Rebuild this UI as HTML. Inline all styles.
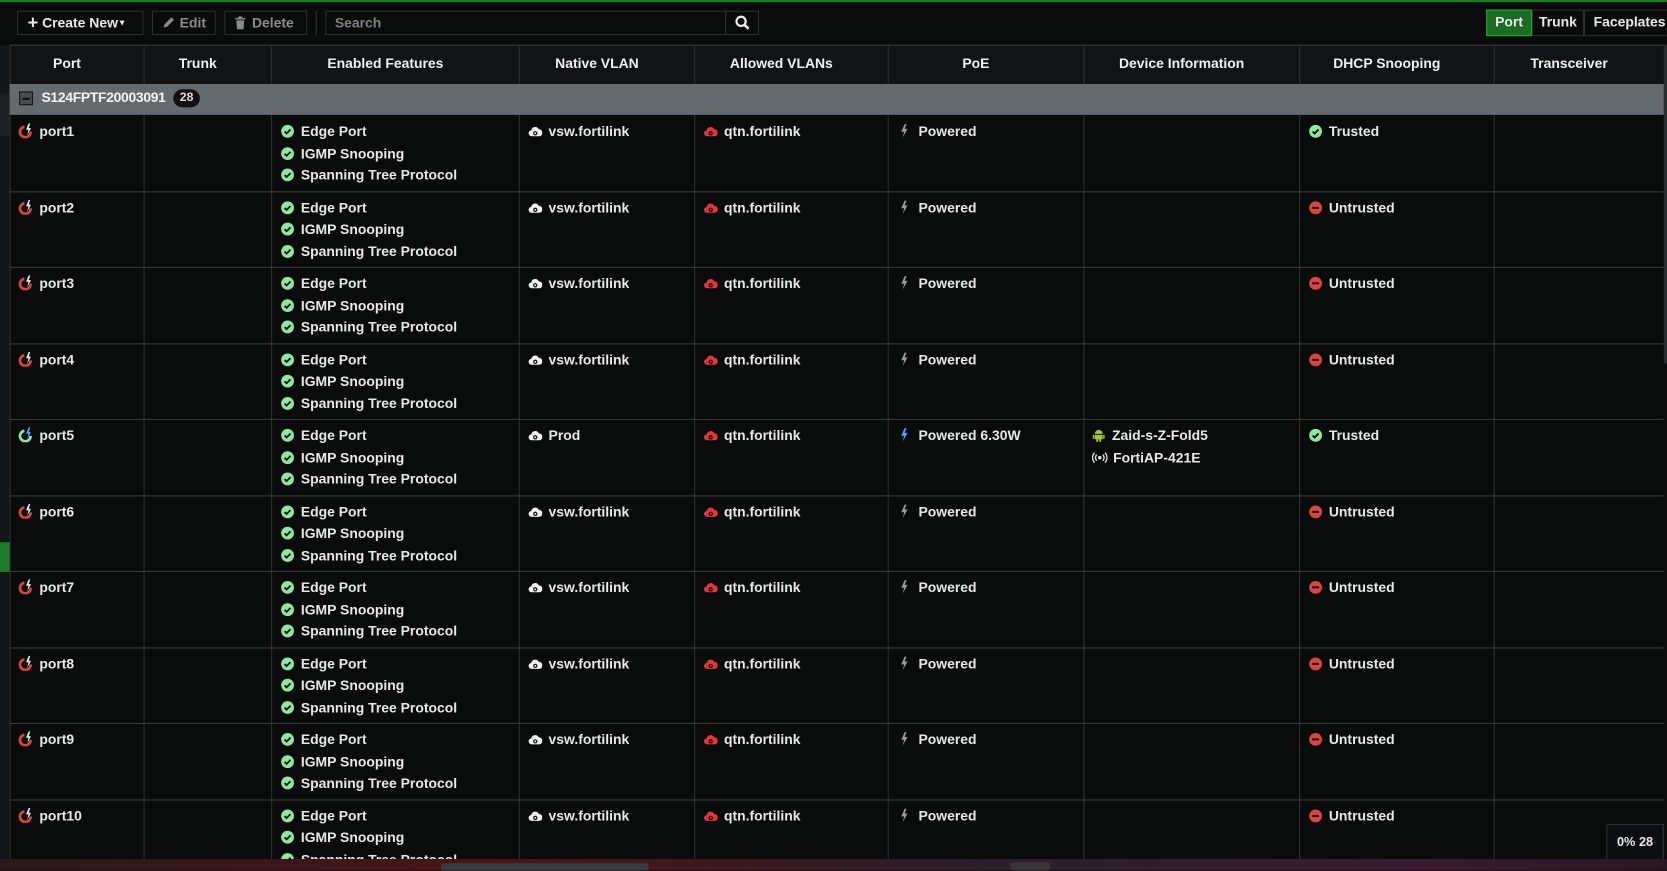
<!DOCTYPE html>
<html><head><meta charset="utf-8"><style>
html,body{margin:0;padding:0;background:#0a0b0b;overflow:hidden;width:1667px;height:871px}
#w{position:absolute;left:0;top:0;width:1568px;height:819px;transform:scale(1.0631);transform-origin:0 0;background:#0a0b0b;font-family:"Liberation Sans",sans-serif;font-weight:bold;font-size:13.1px;color:#e8e8e8;overflow:hidden}
.a{position:absolute}
.btn{position:absolute;top:10px;height:23px;border:1px solid #2d2f30;box-sizing:border-box;line-height:21px;padding:0 8px;color:#e8e8e8;white-space:nowrap}
.vl{position:absolute;top:43px;bottom:11px;width:1px;background:#2e3032}
.hl{position:absolute;left:9px;width:1556px;height:1px;background:#3a3c3e}
.th{position:absolute;top:43px;height:35px;line-height:33px;text-align:center;color:#f0f0f0}
.t{position:absolute;white-space:nowrap;line-height:20px}
.ic{display:inline-block;width:13px;height:13px;vertical-align:-2px;margin-right:6px}
</style></head><body><div id="w">
<div class="a" style="left:0;top:0;width:1568px;height:2px;background:#1f7a2a"></div>
<div class="a" style="left:0;top:43px;width:9px;height:765px;background:#14171a"></div>
<div class="a" style="left:0;top:88px;width:9px;height:40px;background:#1d2124"></div>
<div class="a" style="left:0;top:510px;width:9px;height:28px;background:#1e7a2e"></div>
<div class="btn" style="left:16px;width:119px;padding-left:9px"><b style="font-size:17px;vertical-align:-1px">+</b> Create New<span style="font-size:8px;vertical-align:2px">▼</span></div>
<div class="btn" style="left:143px;width:60px;color:#8a8c8e"><svg width="13" height="13" viewBox="0 0 14 14" style="vertical-align:-2px;margin-right:4px"><path d="M2 12l1-3.5 7-7 2.5 2.5-7 7z" fill="#8a8c8e"/></svg>Edit</div>
<div class="btn" style="left:211px;width:78px;color:#8a8c8e"><svg width="12" height="13" viewBox="0 0 12 14" style="vertical-align:-2px;margin-right:5px"><rect x="1" y="2" width="10" height="1.6" fill="#8a8c8e"/><rect x="4" y="0.5" width="4" height="1.6" fill="#8a8c8e"/><path d="M2 4.5h8l-.7 9H2.7z" fill="#8a8c8e"/></svg>Delete</div>
<div class="a" style="left:297px;top:10px;width:1px;height:23px;background:#333"></div>
<div class="btn" style="left:306px;width:377px;color:#7d8084">Search</div>
<div class="btn" style="left:682px;width:32px;padding:0;text-align:center"><svg width="15" height="15" viewBox="0 0 16 16" style="vertical-align:-3px"><circle cx="6.5" cy="6.5" r="4.6" fill="none" stroke="#eee" stroke-width="2.2"/><path d="M10 10l4 4" stroke="#eee" stroke-width="2.6"/></svg></div>
<div class="btn" style="left:1398px;width:43px;background:#1b6b23;border-color:#28a83a;padding:0;text-align:center;top:9px;height:25px">Port</div>
<div class="btn" style="left:1441px;width:49px;padding:0;text-align:center;top:9px;height:25px">Trunk</div>
<div class="btn" style="left:1490px;width:80px;padding:0 0 0 8px;top:9px;height:25px">Faceplates</div>
<div class="a" style="left:9px;top:42px;width:1556px;height:37px;background:#111315"></div>
<div class="hl" style="top:42px"></div>
<div class="a" style="left:1565px;top:42px;width:3px;height:300px;background:#2a2c2e"></div>
<div class="vl" style="left:9px"></div><div class="vl" style="left:135px"></div><div class="vl" style="left:255px"></div><div class="vl" style="left:488px"></div><div class="vl" style="left:653px"></div><div class="vl" style="left:835px"></div><div class="vl" style="left:1019px"></div><div class="vl" style="left:1222px"></div><div class="vl" style="left:1405px"></div>
<div class="a" style="left:9px;top:79px;width:1556px;height:29px;background:#656a6e"></div>
<div class="a" style="left:18px;top:86px;width:13px;height:13px;border:1px solid #111;background:#4a4e52;box-sizing:border-box"><div style="margin:5px 2px;height:2px;background:#111"></div></div>
<div class="t" style="left:39px;top:82px;color:#f4f4f4;letter-spacing:-0.3px">S124FPTF20003091</div>
<div class="a" style="left:163px;top:84px;width:25px;height:17px;border-radius:9px;background:#111;color:#ddd;font-size:11.5px;text-align:center;line-height:17px">28</div>
<div class="th" style="left:0;width:126px">Port</div><div class="th" style="left:126px;width:120px">Trunk</div><div class="th" style="left:246px;width:233px">Enabled Features</div><div class="th" style="left:479px;width:165px">Native VLAN</div><div class="th" style="left:644px;width:182px">Allowed VLANs</div><div class="th" style="left:826px;width:184px">PoE</div><div class="th" style="left:1010px;width:203px">Device Information</div><div class="th" style="left:1213px;width:183px">DHCP Snooping</div><div class="th" style="left:1396px;width:160px">Transceiver</div>
<div id="rows"></div>
<div class="a" style="left:1511px;top:775px;width:52px;height:33px;background:#0d0e0f;border:1px solid #333;text-align:center;line-height:33px;font-size:12px">0% 28</div>
<div class="a" style="left:0;top:808px;width:1568px;height:11px;background:linear-gradient(90deg,#2a1a1c,#4a1418 30%,#2b1f2a 60%,#3a1a30 85%,#2a1820)"></div>
<div class="a" style="left:415px;top:812px;width:195px;height:7px;background:#3a3a40;border-radius:3px 3px 0 0"></div>
<div class="a" style="left:950px;top:811px;width:38px;height:8px;background:#3a3438;border-radius:3px"></div>
</div>
<script>
var chk='<svg class="ic" viewBox="0 0 14 14"><circle cx="7" cy="7" r="6.5" fill="#8fe6a0"/><path d="M4 7.2l2 2 4-4" fill="none" stroke="#0b0b0b" stroke-width="1.8"/></svg>';
var minus='<svg class="ic" viewBox="0 0 14 14"><circle cx="7" cy="7" r="6.5" fill="#d9463f"/><rect x="3.5" y="6" width="7" height="2" fill="#111"/></svg>';
function cloud(c){return '<svg class="ic" viewBox="0 0 14 14"><path d="M3.5 12a3 3 0 0 1-.5-6 4 4 0 0 1 7.6-1 3.5 3.5 0 0 1 .4 7z" fill="'+c+'"/><circle cx="7" cy="9" r="1.6" fill="none" stroke="#0b0b0b" stroke-width="1.2"/></svg>'}
var bolt=function(c){return '<svg class="ic" viewBox="0 0 10 14" style="width:9px;height:14px;margin-right:9px"><path d="M5.5 0L2 8h3l-1.5 6 5-9H5.5l2-5z" fill="'+c+'"/></svg>'};
function pic(c1,c2){return '<svg class="ic" viewBox="0 0 14 14" style="width:14px;height:14px"><path d="M6 3.2A5 5 0 1 0 11.8 8" fill="none" stroke="'+c1+'" stroke-width="2.6"/><path d="M10 0L7.5 6h2.2l-1 5 3.5-6.5H10l1.5-4.5z" fill="'+c2+'"/></svg>'}
var h='';
for(var i=0;i<10;i++){
 var y=109+i*71.5,p5=(i==4);
 if(i>0)h+='<div class="hl" style="top:'+(y-1)+'px"></div>';
 var ty=y+5;
 h+='<div class="t" style="left:17px;top:'+ty+'px">'+(p5?pic('#8fe6a0','#4aa8ff'):pic('#d9463f','#e8e8e8'))+'port'+(i+1)+'</div>';
 ['Edge Port','IGMP Snooping','Spanning Tree Protocol'].forEach(function(s,k){h+='<div class="t" style="left:264px;top:'+(ty+k*20.7)+'px">'+chk+s+'</div>'});
 h+='<div class="t" style="left:497px;top:'+ty+'px">'+cloud('#f0f0f0')+(p5?'Prod':'vsw.fortilink')+'</div>';
 h+='<div class="t" style="left:662px;top:'+ty+'px">'+cloud('#e0383a')+'qtn.fortilink</div>';
 h+='<div class="t" style="left:846px;top:'+ty+'px">'+bolt(p5?'#4aa8ff':'#9a9a9a')+(p5?'Powered 6.30W':'Powered')+'</div>';
 if(p5){h+='<div class="t" style="left:1027px;top:'+ty+'px"><svg class="ic" viewBox="0 0 14 14"><path d="M3 5.5a4 4 0 0 1 8 0zM3 6.5h8v4.5H3zM4.5 11h2v2.5h-2zM7.5 11h2v2.5h-2zM1 6.5h1.5v4H1zM11.5 6.5H13v4h-1.5z" fill="#a4c639"/></svg>Zaid-s-Z-Fold5</div>';
 h+='<div class="t" style="left:1027px;top:'+(ty+20.7)+'px"><svg class="ic" viewBox="0 0 16 14" style="width:15px;margin-right:5px"><circle cx="8" cy="7" r="1.8" fill="#ddd"/><path d="M5 4a4 4 0 0 0 0 6M11 4a4 4 0 0 1 0 6M2.8 2a7 7 0 0 0 0 10M13.2 2a7 7 0 0 1 0 10" fill="none" stroke="#ddd" stroke-width="1.4"/></svg>FortiAP-421E</div>';}
 var tr=(i==0||i==4);
 h+='<div class="t" style="left:1231px;top:'+ty+'px">'+(tr?chk:minus)+(tr?'Trusted':'Untrusted')+'</div>';
}
document.getElementById('rows').innerHTML=h;
</script>
</body></html>
